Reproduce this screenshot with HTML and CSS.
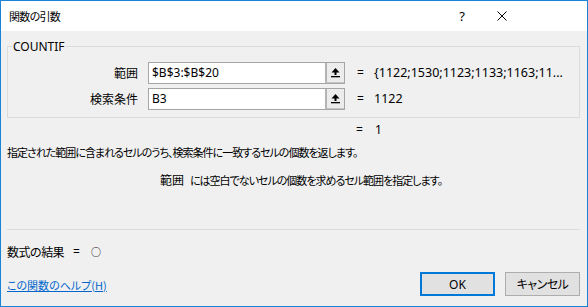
FILE: index.html
```html
<!DOCTYPE html>
<html lang="ja">
<head>
<meta charset="utf-8">
<title>関数の引数</title>
<link rel="stylesheet" href="styles.css">
</head>
<body>
<div class="window">
  <div class="titlebar">
    <span class="title">関数の引数</span>
    <span class="help">?</span>
    <svg class="close" width="10" height="10" viewBox="0 0 10 10"><path d="M0.5 0.5L9.5 9.5M9.5 0.5L0.5 9.5" stroke="#000" stroke-width="1" fill="none"/></svg>
  </div>
  <div class="content">
    <fieldset class="group">
      <legend class="legend">COUNTIF</legend>
      <div class="args">
        <div class="label">範囲</div>
        <div class="field">
          <div class="text">$B$3:$B$20</div>
          <div class="btn"><svg width="9" height="10" viewBox="0 0 9 10"><path d="M4.5 0L0.5 4.5H3.5V7H5.5V4.5H8.5Z" fill="#000"/><rect x="0" y="8" width="9" height="1.3" fill="#000"/></svg></div>
        </div>
        <div class="eq">=</div>
        <div class="val">{1122;1530;1123;1133;1163;11...</div>

        <div class="label">検索条件</div>
        <div class="field">
          <div class="text">B3</div>
          <div class="btn"><svg width="9" height="10" viewBox="0 0 9 10"><path d="M4.5 0L0.5 4.5H3.5V7H5.5V4.5H8.5Z" fill="#000"/><rect x="0" y="8" width="9" height="1.3" fill="#000"/></svg></div>
        </div>
        <div class="eq">=</div>
        <div class="val">1122</div>
      </div>
    </fieldset>
    <div class="result-line"><span class="eq">=</span><span class="val">1</span></div>
    <div class="desc">指定された範囲に含まれるセルのうち、検索条件に一致するセルの個数を返します。</div>
    <div class="desc2"><span class="argname">範囲</span><span class="argdesc">には空白でないセルの個数を求めるセル範囲を指定します。</span></div>
    <div class="sep"></div>
    <div class="formula"><span class="flabel">数式の結果</span><span class="feq">=</span><span class="zero">○</span></div>
    <div class="bottom">
      <a class="helplink" href="#">この関数のヘルプ(H)</a>
      <div class="buttons">
        <button class="button ok">OK</button>
        <button class="button jp">キャンセル</button>
      </div>
    </div>
  </div>
</div>
</body>
</html>
```
FILE: styles.css
```css
html, body {
  margin: 0;
  padding: 0;
}
body {
  font-family: "Noto Sans", "Noto Sans CJK JP", sans-serif;
  font-size: 12px;
  color: #000;
}
.window {
  width: 588px;
  height: 307px;
  box-sizing: border-box;
  border: 1px solid #1883d7;
  background: #f0f0f0;
  display: flex;
  flex-direction: column;
}
.titlebar {
  height: 30px;
  flex: none;
  background: #fff;
  display: flex;
  align-items: center;
}
.title {
  font-family: "Noto Sans CJK JP", sans-serif;
  font-size: 11px;
  letter-spacing: -0.8px;
  margin-left: 8px;
  line-height: 16px;
}
.help {
  margin-left: auto;
  font-size: 13px;
  line-height: 16px;
  font-family: "Noto Sans", sans-serif;
  margin-right: 32px;
}
.close {
  margin-right: 80px;
}
.content {
  flex: 1;
  padding: 0 7px 9px 6px;
  display: flex;
  flex-direction: column;
}
.group {
  margin: 8px 0 0 0;
  padding: 8px 0 7px 0;
  border: 1px solid #dcdcdc;
  min-width: 0;
}
.legend {
  margin-left: 4px;
  padding: 0 1px;
  line-height: 15px;
  font-size: 12px;
}
.args {
  display: grid;
  grid-template-columns: 140px 197px 29px 1fr;
  grid-auto-rows: 22px;
  row-gap: 4px;
  align-items: center;
}
.label {
  font-family: "Noto Sans CJK JP", sans-serif;
  text-align: right;
  padding-right: 10px;
  line-height: 16px;
}
.field {
  height: 22px;
  box-sizing: border-box;
  border: 1px solid #a5a5a5;
  background: #fff;
  display: flex;
}
.text {
  flex: 1;
  padding-left: 3px;
  line-height: 20px;
}
.btn {
  width: 19px;
  box-sizing: border-box;
  background: #ececec;
  border-left: 2px solid #b4b4b4;
  border-bottom: 1px solid #c4c4c4;
  display: flex;
  align-items: center;
  justify-content: center;
}
.eq {
  line-height: 16px;
}
.val {
  line-height: 16px;
  white-space: nowrap;
}
.args .eq {
  padding-left: 12px;
}
.args .val {
  font-size: 12.5px;
}
.result-line {
  margin-top: 4px;
  line-height: 16px;
  padding-left: 349px;
  display: flex;
}
.result-line .val {
  margin-left: 12px;
}
.desc {
  margin-top: 6px;
  line-height: 16px;
  font-family: "Noto Sans CJK JP", sans-serif;
  font-feature-settings: "palt";
  font-size: 11px;
  letter-spacing: -1px;
  white-space: nowrap;
}
.desc2 {
  margin-top: 12px;
  line-height: 16px;
  font-family: "Noto Sans CJK JP", sans-serif;
  font-feature-settings: "palt";
  font-size: 11px;
  letter-spacing: -1px;
  white-space: nowrap;
  padding-left: 153px;
}
.argname {
  letter-spacing: 0;
  font-size: 12px;
}
.argdesc {
  margin-left: 6px;
}
.sep {
  margin-top: 41px;
  height: 1px;
  background: #dcdcdc;
}
.formula {
  margin-top: 14px;
  line-height: 16px;
  font-family: "Noto Sans CJK JP", sans-serif;
  display: flex;
  align-items: center;
}
.flabel {
  letter-spacing: -0.6px;
}
.feq {
  margin-left: 9px;
  font-family: "Noto Sans", sans-serif;
}
.zero {
  margin-left: 11px;
  font-size: 10px;
}
.bottom {
  margin-top: 12px;
  display: flex;
  align-items: center;
}
.helplink {
  font-family: "Noto Sans CJK JP", sans-serif;
  font-feature-settings: "palt";
  font-size: 11px;
  color: #0066cc;
  text-decoration: underline;
  line-height: 16px;
  margin-top: 2px;
}
.buttons {
  margin-left: auto;
  display: flex;
  gap: 10px;
}
.button {
  width: 75px;
  height: 24px;
  box-sizing: border-box;
  background: #e1e1e1;
  border: 1px solid #adadad;
  font-family: "Noto Sans", "Noto Sans CJK JP", sans-serif;
  font-size: 12px;
  padding: 0;
  color: #000;
}
.button.jp {
  font-feature-settings: "palt";
  letter-spacing: -0.5px;
}
.button.ok {
  border: 2px solid #0078d7;
}
```
